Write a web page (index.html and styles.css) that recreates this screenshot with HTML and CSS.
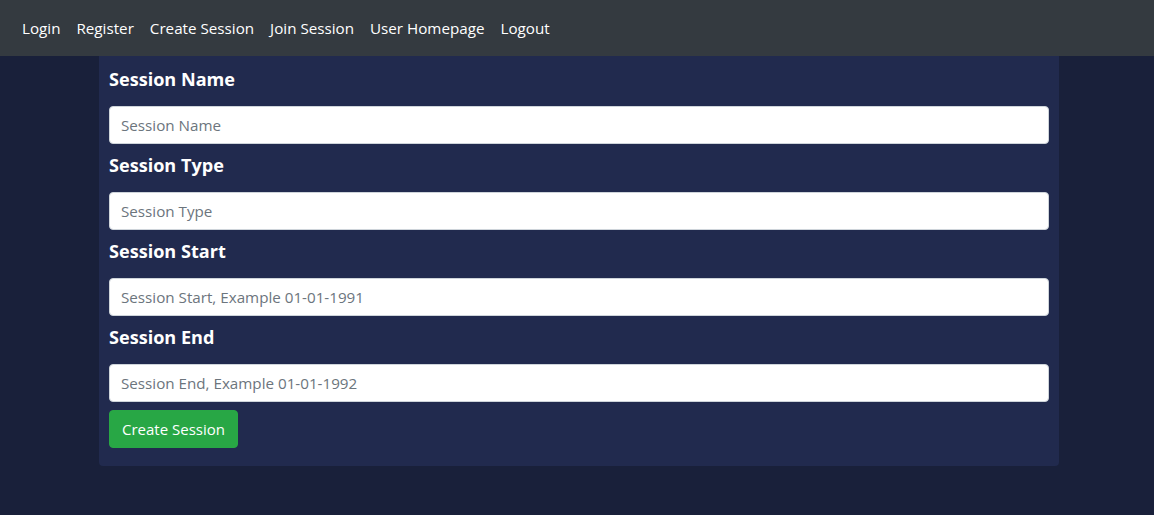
FILE: index.html
```html
<!DOCTYPE html>
<html lang="en">
<head>
<meta charset="utf-8">
<title>Create Session</title>
<link rel="stylesheet" href="styles.css">
</head>
<body>
<nav class="navbar">
  <a class="nav-link" href="#">Login</a>
  <a class="nav-link" href="#">Register</a>
  <a class="nav-link" href="#">Create Session</a>
  <a class="nav-link" href="#">Join Session</a>
  <a class="nav-link" href="#">User Homepage</a>
  <a class="nav-link" href="#">Logout</a>
</nav>
<main class="card">
  <form class="session-form">
    <label class="field-label" for="name">Session Name</label>
    <input class="field-input" id="name" type="text" placeholder="Session Name">
    <label class="field-label" for="type">Session Type</label>
    <input class="field-input" id="type" type="text" placeholder="Session Type">
    <label class="field-label" for="start">Session Start</label>
    <input class="field-input" id="start" type="text" placeholder="Session Start, Example 01-01-1991">
    <label class="field-label" for="end">Session End</label>
    <input class="field-input" id="end" type="text" placeholder="Session End, Example 01-01-1992">
    <div class="actions">
      <button class="btn-create" type="button">Create Session</button>
    </div>
  </form>
</main>
</body>
</html>
```
FILE: styles.css
```css
* { box-sizing: border-box; }
html, body { margin: 0; padding: 0; }
body {
  background: #19203a;
  font-family: "Open Sans", "Noto Sans", "Liberation Sans", sans-serif;
  font-size: 16px;
  color: #fff;
  min-height: 515px;
}
.navbar {
  background: #343a40;
  height: 56px;
  display: flex;
  align-items: center;
  padding: 0 14px;
}
.nav-link {
  color: #fff;
  text-decoration: none;
  padding: 0 8px;
  font-size: 15.2px;
  line-height: 24px;
}
.card {
  width: 960px;
  margin-left: calc(50% - 478px);
  background: #212a4e;
  border-radius: 0 0 4px 4px;
  padding: 2px 10px 18px;
}
.session-form {
  display: flex;
  flex-direction: column;
}
.field-label {
  font-size: 18.1px;
  font-weight: 700;
  line-height: 24px;
  padding: 9px 0 15px;
}
.field-input {
  height: 38px;
  border: 1px solid #ced4da;
  border-radius: 4px;
  padding: 6px 11px;
  font-family: inherit;
  font-size: 15.2px;
  color: #495057;
  background: #fff;
}
.field-input::placeholder { color: #6c757d; }
.actions {
  display: flex;
  padding-top: 8px;
}
.btn-create {
  height: 38px;
  padding: 0 12px;
  background: #28a745;
  border: 1px solid #28a745;
  border-radius: 4px;
  color: #fff;
  font-family: inherit;
  font-size: 15px;
}
```
